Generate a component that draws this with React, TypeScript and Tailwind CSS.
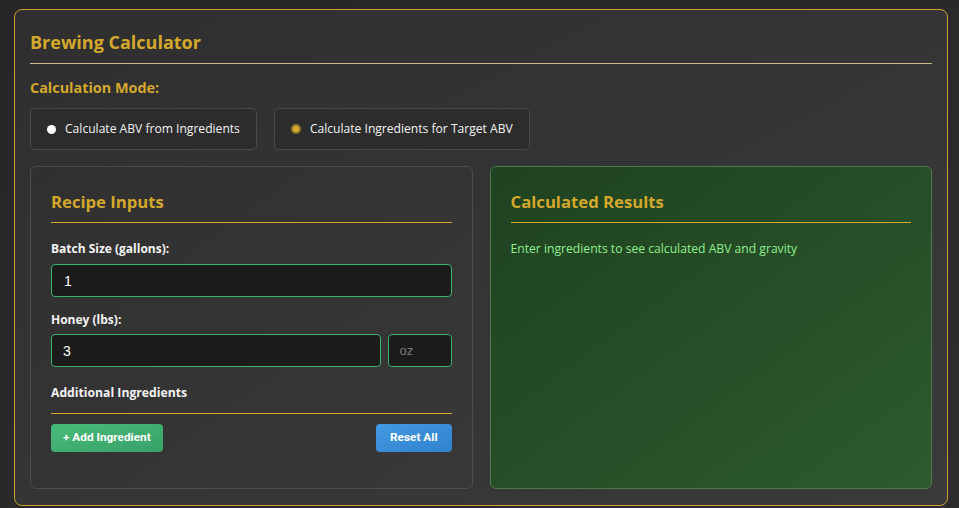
import { useState } from "react";

const font = { fontFamily: '"Segoe UI", "Open Sans", "Noto Sans", sans-serif' };
const arial = { fontFamily: '"Liberation Sans", Arial, sans-serif' };

function ModeOption({
  label,
  checked,
  onSelect,
}: {
  label: string;
  checked: boolean;
  onSelect: () => void;
}) {
  return (
    <label
      onClick={onSelect}
      className="flex h-[42px] cursor-pointer items-center gap-[9px] rounded-[5px] border border-[#4a4a4a] bg-[#2c2c2c] pr-[16px] pl-[16px] text-[12.1px] leading-[16px] text-[#f2f2f2]"
    >
      <span
        className={
          checked
            ? "h-[10px] w-[10px] rounded-full border-2 border-[#8f7a2a] bg-[#d9ad30]"
            : "h-[9px] w-[9px] rounded-full bg-white"
        }
      />
      {label}
    </label>
  );
}

function SectionTitle({ children }: { children: string }) {
  return (
    <h2 className="border-b border-[#d4a82c] pb-[8px] text-[16.7px] leading-[24px] font-bold text-[#d4a82c]">
      {children}
    </h2>
  );
}

function RecipeInputs() {
  return (
    <section className="flex flex-col rounded-[6px] border border-[#4d4d4d] bg-gradient-to-br from-[#303030] to-[#383838] px-[20px] pt-[23px]">
      <SectionTitle>Recipe Inputs</SectionTitle>
      <label className="mt-[18px] text-[12px] leading-[16px] font-bold text-[#f4f4f4]">
        Batch Size (gallons):
      </label>
      <input
        defaultValue="1"
        className="mt-[7px] h-[33px] rounded-[4px] border border-[#3cb371] bg-[#1b1b1b] px-[12px] text-[14px] text-white outline-none"
        style={arial}
      />
      <label className="mt-[15px] text-[12px] leading-[16px] font-bold text-[#f4f4f4]">Honey (lbs):</label>
      <div className="mt-[6px] flex gap-[7px]">
        <input
          defaultValue="3"
          className="h-[33px] min-w-0 flex-1 rounded-[4px] border border-[#3cb371] bg-[#1b1b1b] px-[11px] text-[14px] text-white outline-none"
          style={arial}
        />
        <input
          placeholder="oz"
          className="h-[33px] w-[64px] rounded-[4px] border border-[#3cb371] bg-[#1b1b1b] px-[11px] text-[13px] text-white placeholder:text-[#7a7a7a] outline-none"
          style={arial}
        />
      </div>
      <h3 className="mt-[18px] border-b border-[#d4a82c] pb-[12px] text-[12.2px] leading-[16px] font-bold text-[#f4f4f4]">
        Additional Ingredients
      </h3>
      <div className="mt-[10px] flex justify-between" style={{ fontFamily: "Roboto, Arial, sans-serif" }}>
        <button className="h-[28px] rounded-[4px] bg-gradient-to-br from-[#48bb78] to-[#38a169] px-[12px] text-[11.8px] font-bold text-white">
          + Add Ingredient
        </button>
        <button className="h-[28px] rounded-[4px] bg-gradient-to-br from-[#4299e1] to-[#3182ce] px-[14px] text-[11.8px] font-bold text-white">
          Reset All
        </button>
      </div>
    </section>
  );
}

function Results() {
  return (
    <section className="flex flex-col rounded-[6px] border border-[#4a7a50] bg-gradient-to-br from-[#1f4220] to-[#2e5a2e] px-[20px] pt-[23px]">
      <SectionTitle>Calculated Results</SectionTitle>
      <p className="mt-[18px] text-[12.15px] leading-[16px] text-[#90ee90]">
        Enter ingredients to see calculated ABV and gravity
      </p>
    </section>
  );
}

export default function App() {
  const [mode, setMode] = useState<"abv" | "ingredients">("ingredients");

  return (
    <div
      className="min-h-[508px] bg-gradient-to-br from-[#262626] to-[#2d2d2d] pt-[9px] pr-[11px] pb-[2px] pl-[14px]"
      style={font}
    >
      <main className="flex flex-col rounded-[8px] border border-[#c9a32c] bg-gradient-to-br from-[#2f2f2f] to-[#3a3a3a] px-[15px] pt-[20px] pb-[16px]">
        <h1 className="border-b border-[#c9b98e] pb-[9px] text-[18px] leading-[24px] font-bold text-[#d4a82c]">
          Brewing Calculator
        </h1>
        <h2 className="mt-[14px] text-[14.4px] leading-[20px] font-bold text-[#d4a82c]">Calculation Mode:</h2>
        <div className="mt-[10px] flex gap-[17px]">
          <ModeOption
            label="Calculate ABV from Ingredients"
            checked={mode === "abv"}
            onSelect={() => setMode("abv")}
          />
          <ModeOption
            label="Calculate Ingredients for Target ABV"
            checked={mode === "ingredients"}
            onSelect={() => setMode("ingredients")}
          />
        </div>
        <div className="mt-[16px] grid h-[323px] grid-cols-2 gap-[17px]">
          <RecipeInputs />
          <Results />
        </div>
      </main>
    </div>
  );
}
